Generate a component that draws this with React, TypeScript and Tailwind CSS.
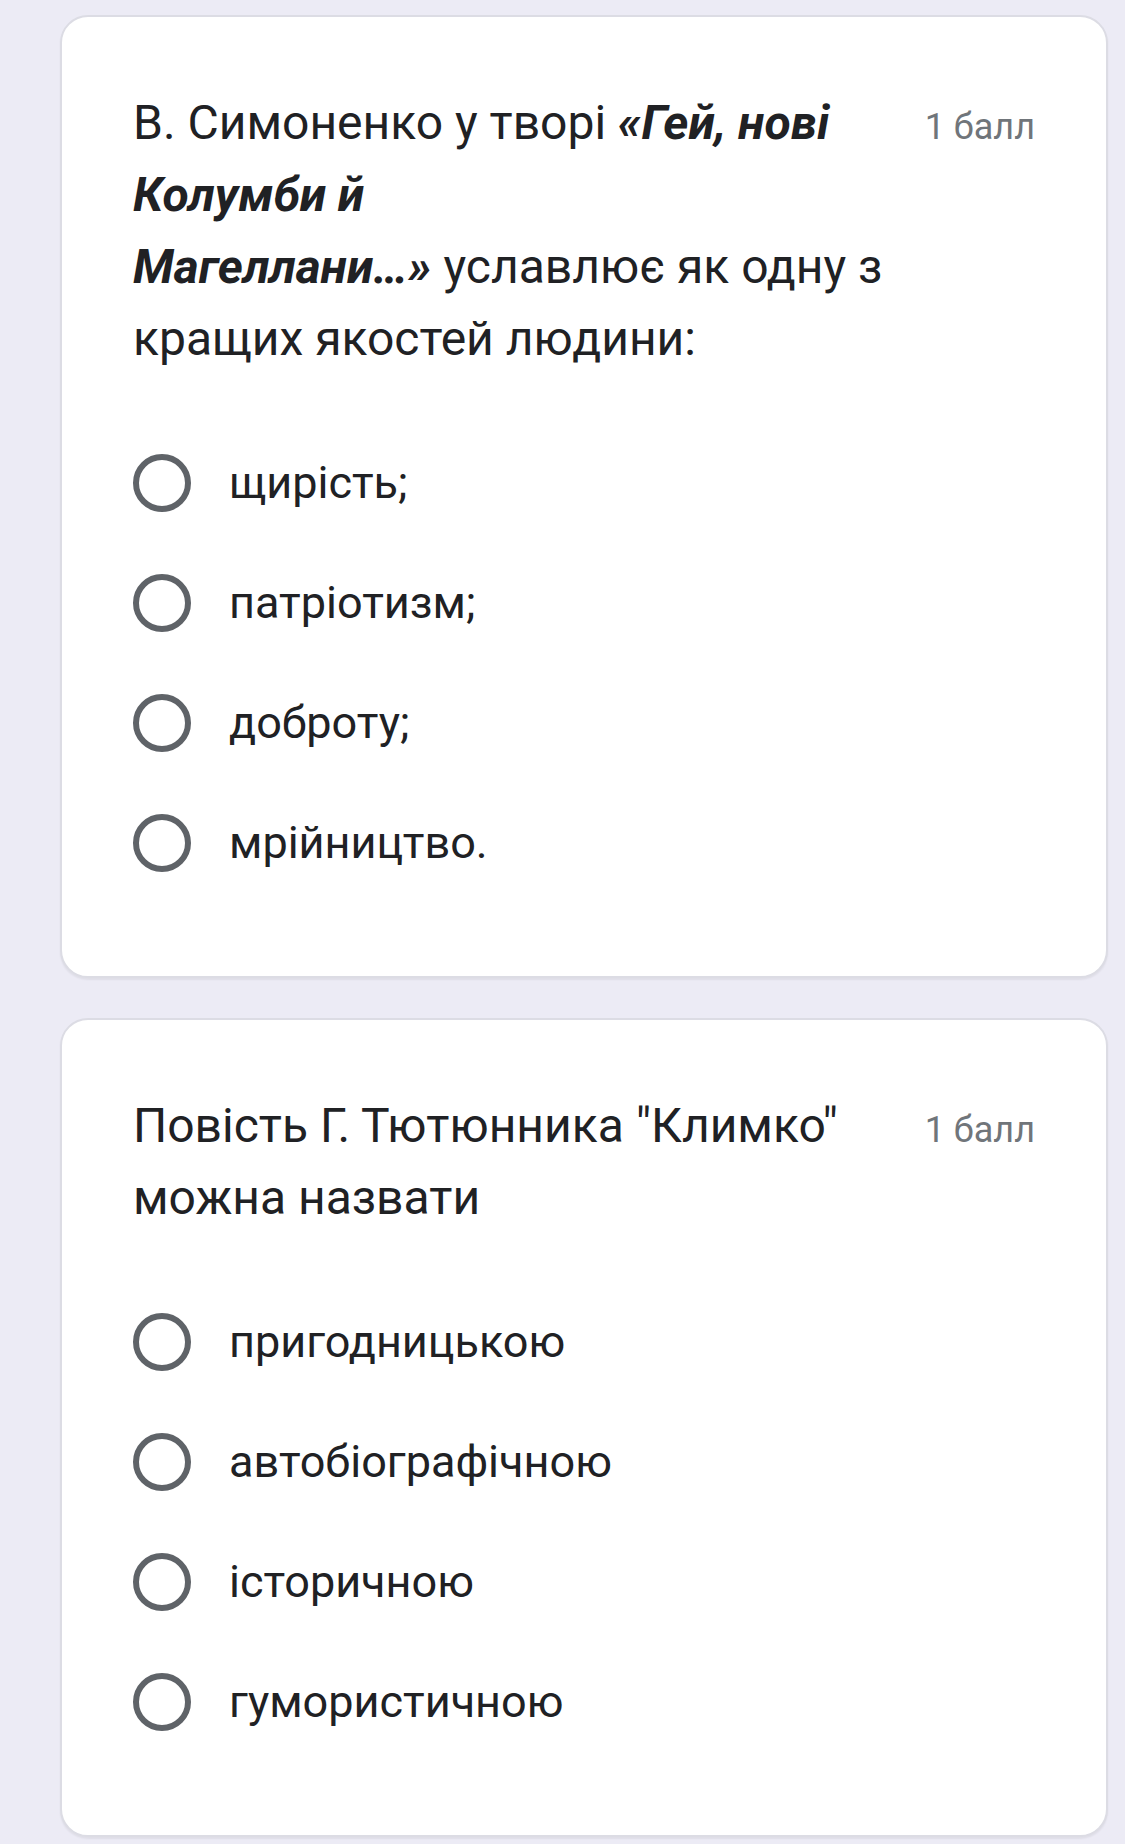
import React from "react";

const font = { fontFamily: "Roboto, 'Noto Sans', sans-serif" };

function Radio({ label }: { label: string }) {
  return (
    <div className="flex items-center h-[120px]">
      <div className="w-[58px] h-[58px] rounded-full border-[6px] border-[#5f6368] shrink-0" />
      <span className="ml-[38px] text-[45px] leading-[56px] text-[#202124]">{label}</span>
    </div>
  );
}

function Card({ question, options }: { question: React.ReactNode; options: string[] }) {
  return (
    <div className="bg-white rounded-[28px] border-2 border-[#dcdce4] shadow-[0_2px_2px_rgba(0,0,0,0.06)] px-[71px] pt-[70px] pb-[73px]">
      <div className="flex items-start">
        <div className="flex-1 text-[48px] leading-[72px] text-[#202124]">{question}</div>
        <div className="shrink-0 ml-[28px] pt-[4px] text-[36px] leading-[72px] text-[#70757a]">1 балл</div>
      </div>
      <div className="mt-[48px] flex flex-col">
        {options.map((o) => (
          <Radio key={o} label={o} />
        ))}
      </div>
    </div>
  );
}

export default function App() {
  return (
    <div className="min-h-[1844px] w-[1125px] bg-[#ecebf5] pt-[15px] pl-[60px] pr-[17px] flex flex-col gap-[40px]" style={font}>
      <Card
        question={
          <>
            В. Симоненко у творі <b className="italic font-bold">«Гей, нові Колумби й</b>
            <br />
            <b className="italic font-bold">Магеллани…»</b> уславлює як одну з кращих якостей людини:
          </>
        }
        options={["щирість;", "патріотизм;", "доброту;", "мрійництво."]}
      />
      <Card
        question={<>Повість Г. Тютюнника "Климко" можна назвати</>}
        options={["пригодницькою", "автобіографічною", "історичною", "гумористичною"]}
      />
    </div>
  );
}
